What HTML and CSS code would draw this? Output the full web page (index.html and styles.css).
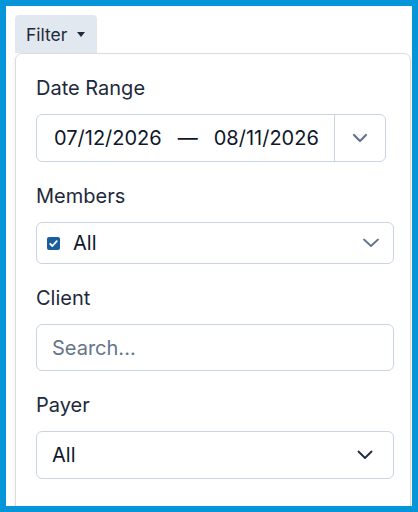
FILE: index.html
```html
<!DOCTYPE html>
<html>
<head>
<meta charset="utf-8">
<link rel="stylesheet" href="styles.css">
</head>
<body>
<div class="frame">
  <button class="filter-btn">Filter <span class="caret"></span></button>
  <div class="panel">
    <div class="group">
      <div class="label">Date Range</div>
      <div class="date-box">
        <span class="date">07/12/2026</span>
        <span class="dash">—</span>
        <span class="date">08/11/2026</span>
        <span class="date-toggle">
          <svg width="16" height="10" viewBox="0 0 16 10"><path d="M2 2 L8 8 L14 2" fill="none" stroke="#64748b" stroke-width="2.2" stroke-linecap="round" stroke-linejoin="round"/></svg>
        </span>
      </div>
    </div>
    <div class="group">
      <div class="label">Members</div>
      <div class="select members">
        <span class="check">
          <svg width="13" height="13" viewBox="0 0 13 13"><rect x="0" y="0" width="13" height="13" rx="2" fill="#1b5e9c"/><path d="M3.2 6.8 L5.4 9 L9.8 4.2" fill="none" stroke="#fff" stroke-width="1.8" stroke-linecap="round" stroke-linejoin="round"/></svg>
        </span>
        <span class="value">All</span>
        <svg class="chev" width="18" height="10" viewBox="0 0 18 10"><path d="M2 1.5 L9 8 L16 1.5" fill="none" stroke="#64748b" stroke-width="1.8" stroke-linecap="round" stroke-linejoin="round"/></svg>
      </div>
    </div>
    <div class="group">
      <div class="label">Client</div>
      <div class="input"><span class="placeholder">Search...</span></div>
    </div>
    <div class="group">
      <div class="label">Payer</div>
      <div class="select payer">
        <span class="value">All</span>
        <svg class="chev" width="16" height="10" viewBox="0 0 16 10"><path d="M1.5 1.5 L8 8 L14.5 1.5" fill="none" stroke="#1e293b" stroke-width="1.8" stroke-linecap="round" stroke-linejoin="round"/></svg>
      </div>
    </div>
  </div>
</div>
</body>
</html>
```
FILE: styles.css
```css
html, body {
  margin: 0;
  padding: 0;
}
body {
  font-family: Inter, "Liberation Sans", sans-serif;
  color: #1e293b;
}
.frame {
  box-sizing: border-box;
  width: 418px;
  height: 512px;
  border: 6px solid #0795d9;
  background: #fff;
  overflow: hidden;
  padding: 9px 0 0 9px;
}
.filter-btn {
  display: flex;
  align-items: center;
  box-sizing: border-box;
  height: 38px;
  width: 82px;
  padding: 0 0 0 11px;
  margin: 0;
  border: none;
  border-radius: 4px 4px 0 0;
  background: #e2e8f0;
  font-family: Inter, "Liberation Sans", sans-serif;
  font-size: 17.5px;
  color: #1e293b;
}
.caret {
  display: inline-block;
  width: 0;
  height: 0;
  margin-left: 10px;
  border-left: 4.5px solid transparent;
  border-right: 4.5px solid transparent;
  border-top: 5px solid #1e293b;
}
.panel {
  box-sizing: border-box;
  width: 396px;
  height: 470px;
  margin-top: 0;
  border: 1px solid #dcdcdc;
  border-radius: 7px 7px 0 0;
  box-shadow: -1px 2px 4px rgba(0,0,0,0.06);
  padding: 23px 16px 0 20px;
}
.group {
  margin-bottom: 23px;
}
.label {
  font-size: 20px;
  line-height: 22px;
  margin-bottom: 15px;
  color: #1e293b;
}
.date-box {
  box-sizing: border-box;
  width: 350px;
  height: 48px;
  border: 1px solid #cbd5e1;
  border-radius: 6px;
  display: flex;
  align-items: center;
  padding-left: 17px;
  font-size: 20px;
  color: #0f172a;
}
.dash {
  margin: 0 16px 0 16px;
}
.date-toggle {
  margin-left: auto;
  width: 50px;
  height: 100%;
  border-left: 1px solid #cbd5e1;
  display: flex;
  align-items: center;
  justify-content: center;
}
.select, .input {
  box-sizing: border-box;
  width: 358px;
  border: 1px solid #cbd5e1;
  border-radius: 6px;
  display: flex;
  align-items: center;
  font-size: 20px;
  color: #0f172a;
}
.members {
  height: 42px;
  padding: 0 13px 0 10px;
}
.check {
  display: flex;
  margin-right: 13px;
}
.chev {
  margin-left: auto;
}
.input {
  height: 47px;
  padding-left: 15px;
}
.placeholder {
  color: #64748b;
}
.payer {
  height: 48px;
  padding: 0 20px 0 15px;
}
```
